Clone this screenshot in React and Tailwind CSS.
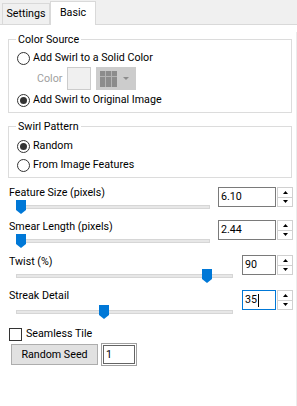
import React from "react";

function Radio({ checked, label }) {
  return (
    <div className="flex h-[16px] items-center gap-[3px] pl-[8px]">
      <span className="flex h-[13px] w-[13px] items-center justify-center rounded-full border border-[#333333] bg-white">
        {checked && <span className="h-[7px] w-[7px] rounded-full bg-[#333333]" />}
      </span>
      <span>{label}</span>
    </div>
  );
}

function Thumb() {
  return (
    <svg width="10" height="14" viewBox="0 0 10 14">
      <path d="M0 0 H10 V10 L5 14 L0 10 Z" fill="#0078d7" />
    </svg>
  );
}

function Slider({ widthClass, left }) {
  return (
    <div className={`relative ml-[8px] flex h-[14px] items-center ${widthClass}`}>
      <div className="h-[4px] w-full border border-[#d6d6d6] bg-[#e7e7e7]" />
      <div className="absolute top-0" style={{ left }}>
        <Thumb />
      </div>
    </div>
  );
}

function Spin() {
  return (
    <div className="flex w-[16px] flex-col border border-[#d0d0d0] bg-white">
      <div className="flex flex-1 items-center justify-center border-b border-[#d0d0d0]">
        <svg width="5" height="3" viewBox="0 0 5 3">
          <path d="M2.5 0 L5 3 H0 Z" fill="#000" />
        </svg>
      </div>
      <div className="flex flex-1 items-center justify-center">
        <svg width="5" height="3" viewBox="0 0 5 3">
          <path d="M0 0 H5 L2.5 3 Z" fill="#000" />
        </svg>
      </div>
    </div>
  );
}

function SliderBlock({ label, value, boxClass, widthClass, left, focused, blockClass, boxTop, sliderGap }) {
  return (
    <div className={`flex justify-between ${blockClass}`}>
      <div className="flex flex-col">
        <div className="ml-[1px] h-[14px] leading-[14px]">{label}</div>
        <div className={sliderGap}>
          <Slider widthClass={widthClass} left={left} />
        </div>
      </div>
      <div className={`flex h-[20px] gap-[1px] ${boxTop}`}>
        <div
          className={`flex items-center bg-white pl-[2px] ${boxClass} border ${
            focused ? "border-[#0078d7]" : "border-[#7a7a7a]"
          }`}
        >
          {value}
          {focused && <span className="ml-[1px] h-[13px] w-[1px] bg-black" />}
        </div>
        <Spin />
      </div>
    </div>
  );
}

export default function App() {
  return (
    <div className="h-[406px] w-[297px] overflow-hidden bg-white font-[Roboto,sans-serif] text-[10.7px] leading-[14px] text-black">
      <div className="flex h-[25px] items-end border-b border-[#d9d9d9] bg-[#f0f0f0] pl-[2px]">
        <div className="flex h-[21px] w-[48px] items-center justify-center border border-b-0 border-[#d9d9d9] bg-[#f0f0f0]">
          Settings
        </div>
        <div className="-mb-[1px] flex h-[24px] w-[46px] items-center justify-center border border-b-0 border-[#d9d9d9] bg-white pb-[6px] pt-[4px]">
          Basic
        </div>
      </div>

      <div className="h-[381px] border-r border-[#ececec] pl-[8px] pr-[3px]">
        <fieldset className="mt-[7px] w-[284px] border border-[#dcdcdc] pb-[4px]">
          <legend className="ml-[7px] px-[2px] leading-[15px]">Color Source</legend>
          <div className="mt-[3px]">
            <Radio label="Add Swirl to a Solid Color" />
          </div>
          <div className="mt-[1px] flex h-[23px] items-center pl-[28px]">
            <span className="w-[30px] text-[#a0a0a0]">Color</span>
            <span className="h-[23px] w-[24px] border border-[#cccccc] bg-[#f0f0f0]" />
            <span className="ml-[5px] flex h-[23px] w-[40px] items-center gap-[6px] bg-[#cccccc] pl-[4px]">
              <svg width="17" height="16" viewBox="0 0 17 16">
                <rect width="17" height="16" fill="#b4b4b4" />
                {[0, 6, 12].map((x) =>
                  [0, 6, 11].map((y) => (
                    <rect key={`${x}-${y}`} x={x} y={y} width="5" height="5" fill="#8c8c8c" />
                  ))
                )}
              </svg>
              <svg width="6" height="3" viewBox="0 0 6 3">
                <path d="M0 0 H6 L3 3 Z" fill="#8c8c8c" />
              </svg>
            </span>
          </div>
          <div className="mt-[2px]">
            <Radio checked label="Add Swirl to Original Image" />
          </div>
        </fieldset>

        <fieldset className="mt-[6px] w-[284px] border border-[#dcdcdc] pb-[4px]">
          <legend className="ml-[7px] px-[2px] leading-[15px]">Swirl Pattern</legend>
          <div className="mt-[4px]">
            <Radio checked label="Random" />
          </div>
          <div className="mt-[3px]">
            <Radio label="From Image Features" />
          </div>
        </fieldset>

        <SliderBlock
          label="Feature Size (pixels)"
          value="6.10"
          boxClass="w-[58px]"
          widthClass="w-[194px]"
          left={0}
          blockClass="mt-[8px]"
          boxTop="mt-[1px]"
          sliderGap=""
        />
        <SliderBlock
          label="Smear Length (pixels)"
          value="2.44"
          boxClass="w-[58px]"
          widthClass="w-[194px]"
          left={0}
          blockClass="mt-[6px]"
          boxTop=""
          sliderGap=""
        />
        <SliderBlock
          label="Twist (%)"
          value="90"
          boxClass="w-[34px]"
          widthClass="w-[217px]"
          left={186}
          blockClass="mt-[7px]"
          boxTop=""
          sliderGap=""
        />
        <SliderBlock
          label="Streak Detail"
          value="35"
          boxClass="w-[34px]"
          widthClass="w-[217px]"
          left={83}
          focused
          blockClass="mt-[6px]"
          boxTop="mt-[1px]"
          sliderGap="mt-[2px]"
        />

        <div className="mt-[8px] flex h-[14px] items-center gap-[4px] pl-[1px]">
          <span className="h-[13px] w-[13px] border border-[#333333] bg-white" />
          <span>Seamless Tile</span>
        </div>

        <div className="mt-[3px] flex items-start pl-[3px]">
          <button className="h-[21px] w-[87px] border border-[#adadad] bg-[#e1e1e1]">
            Random Seed
          </button>
          <div className="-mt-[1px] ml-[3px] h-[23px] w-[36px] border border-[#a0a0a0] bg-white p-[1px]">
            <div className="flex h-full items-center border border-[#646464] pl-[2px]">1</div>
          </div>
        </div>
      </div>
    </div>
  );
}
